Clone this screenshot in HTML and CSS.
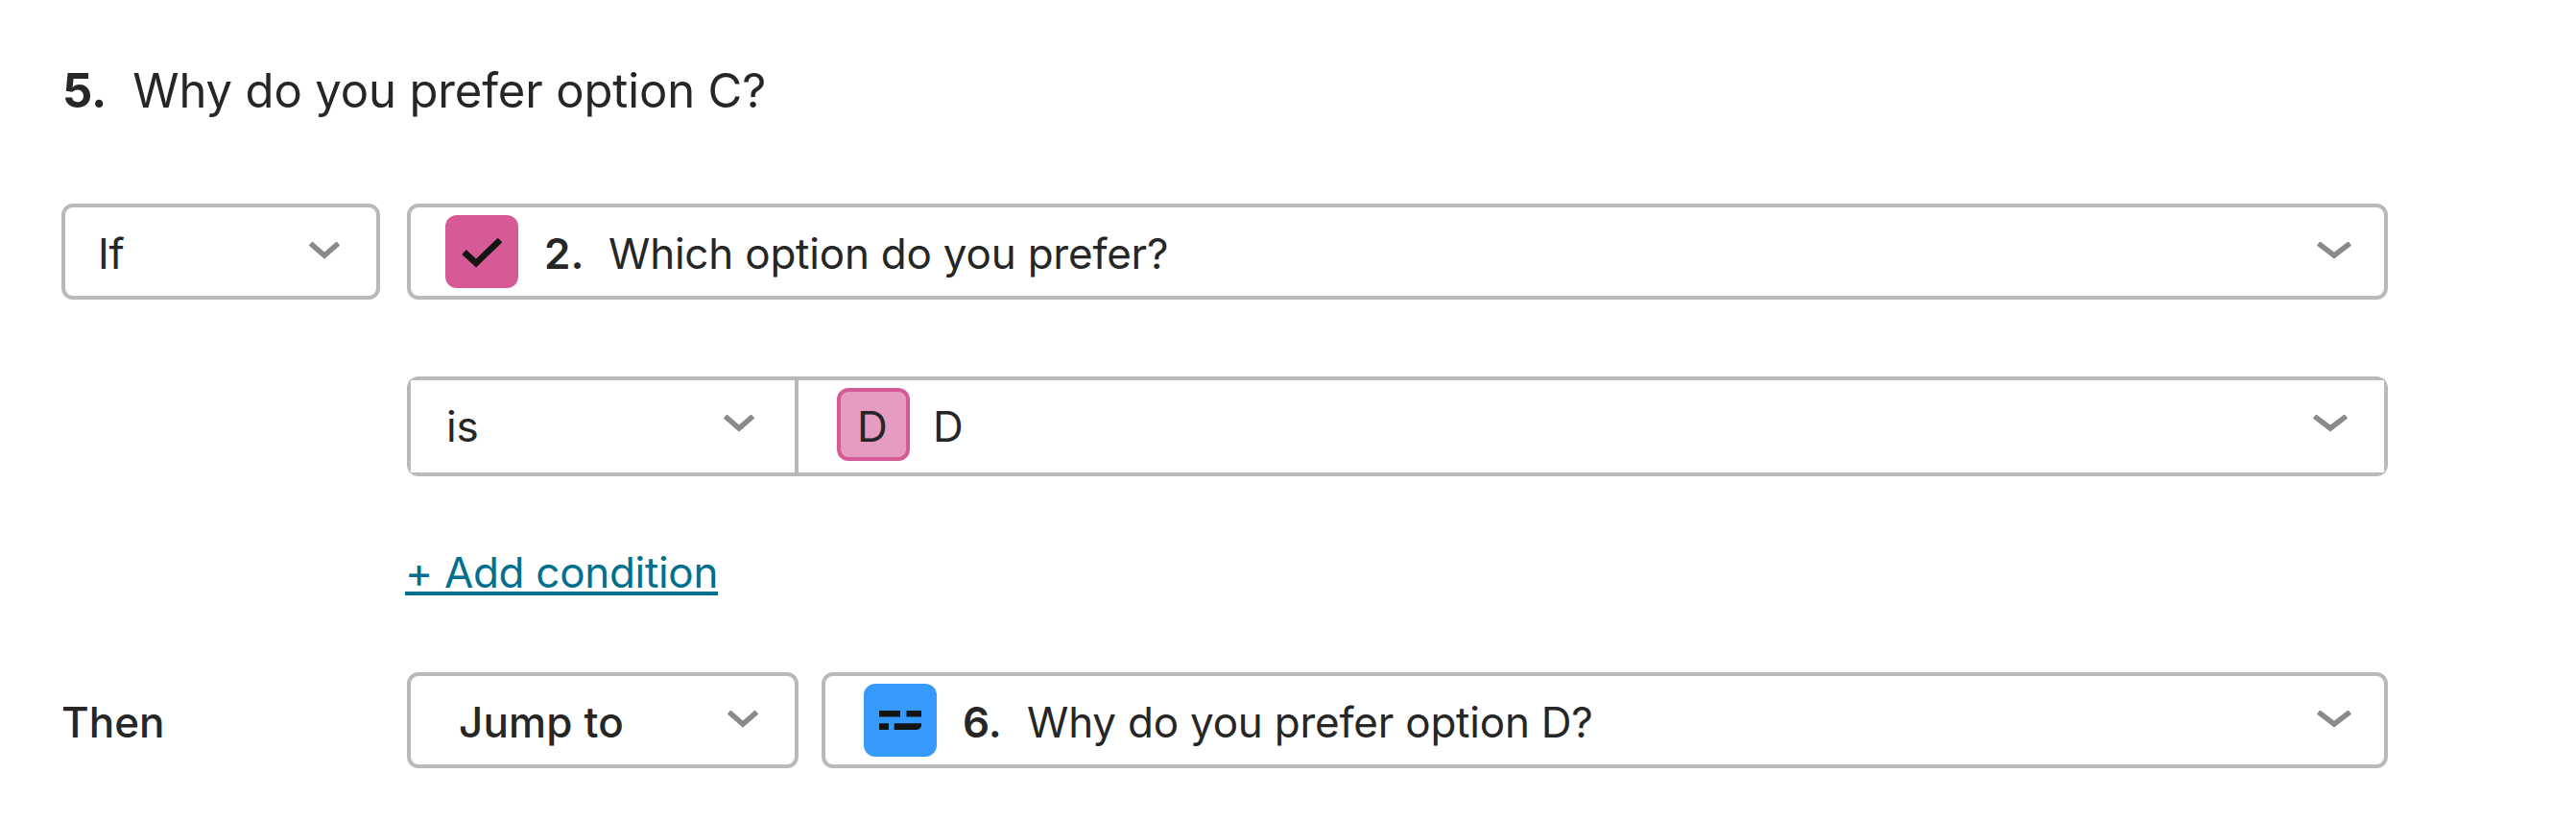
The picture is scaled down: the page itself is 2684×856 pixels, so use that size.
FILE: index.html
```html
<!DOCTYPE html>
<html lang="en">
<head>
    <meta charset="UTF-8">
    <meta name="viewport" content="width=device-width, initial-scale=1.0">
    <title>Question Logic</title>
    <link rel="stylesheet" href="styles.css">
</head>
<body>
    <div class="logic">
        <h1 class="question"><b>5.</b><span>Why do you prefer option C?</span></h1>

        <div class="row">
            <div class="select select-if">
                <span class="value">If</span>
                <svg class="chevron" width="32" height="18" viewBox="0 0 32 18"><path d="M1.5 1.5 L16 14 L30.5 1.5"/></svg>
            </div>
            <div class="select select-wide">
                <span class="badge badge-choice">
                    <svg width="76" height="76" viewBox="0 0 76 76"><path class="check" d="M19.5 38.5 L32 50 L57 26"/></svg>
                </span>
                <span class="number">2.</span>
                <span class="value">Which option do you prefer?</span>
                <svg class="chevron" width="36" height="18" viewBox="0 0 36 18"><path d="M1.5 1.5 L18 14 L34.5 1.5"/></svg>
            </div>
        </div>

        <div class="row row-compare">
            <div class="group">
                <div class="select select-operator">
                    <span class="value">is</span>
                    <svg class="chevron" width="32" height="18" viewBox="0 0 32 18"><path d="M1.5 1.5 L16 14 L30.5 1.5"/></svg>
                </div>
                <div class="select select-answer">
                    <span class="badge badge-letter">D</span>
                    <span class="value">D</span>
                    <svg class="chevron" width="36" height="18" viewBox="0 0 36 18"><path d="M1.5 1.5 L18 14 L34.5 1.5"/></svg>
                </div>
            </div>
        </div>

        <a class="add-condition" href="#">+ Add condition</a>

        <div class="row">
            <div class="label">Then</div>
            <div class="select select-action">
                <span class="value">Jump to</span>
                <svg class="chevron" width="32" height="18" viewBox="0 0 32 18"><path d="M1.5 1.5 L16 14 L30.5 1.5"/></svg>
            </div>
            <div class="select select-wide select-target">
                <span class="badge badge-text">
                    <svg width="76" height="76" viewBox="0 0 76 76">
                        <path d="M16 28h22v6.5H16zM44.5 28H60v6.5H44.5zM16 41.2h10V48H16zM31.7 41.2H60V43a5 5 0 0 1-5 5H31.7z"/>
                    </svg>
                </span>
                <span class="number">6.</span>
                <span class="value">Why do you prefer option D?</span>
                <svg class="chevron" width="36" height="18" viewBox="0 0 36 18"><path d="M1.5 1.5 L18 14 L34.5 1.5"/></svg>
            </div>
        </div>
    </div>
</body>
</html>
```
FILE: styles.css
```css
* {
    margin: 0;
    padding: 0;
    box-sizing: border-box;
}

body {
    font-family: Inter, sans-serif;
    font-size: 44px;
    line-height: 52px;
    background-color: #fff;
    color: #262626;
}

.logic {
    width: 2488px;
    padding: 65px 0 56px 64px;
}

.question {
    display: flex;
    gap: 27px;
    margin-bottom: 87px;
    padding-left: 1px;
    font-size: 49px;
    font-weight: 400;
    line-height: 60px;
    letter-spacing: -0.14px;
}

.row {
    display: flex;
}

.row-compare {
    margin-top: 80px;
    padding-left: 360px;
}

.label {
    width: 360px;
    padding-top: 26px;
    font-weight: 500;
}

.select {
    display: flex;
    height: 100px;
    padding: 8px 34px 8px 36px;
    border: 4px solid #b9b9b9;
    border-radius: 12px;
}

.select-if {
    width: 332px;
    margin-right: 28px;
    padding-left: 34px;
    padding-right: 38px;
}

.select-wide {
    flex: 1;
}

.group {
    display: flex;
    flex: 1;
    border-radius: 12px;
    overflow: hidden;
}

/* the group clips the corners */
.group .select {
    height: 104px;
    border-radius: 0;
}

.group .select-operator {
    width: 408px;
    padding-left: 37px;
    padding-right: 42px;
}

.group .select-answer {
    flex: 1;
    padding-left: 40px;
    padding-right: 38px;
    border-left: 0;
}

.select-action {
    width: 408px;
    margin-right: 24px;
    padding-left: 50px;
    padding-right: 38px;
    font-weight: 500;
}

.select-target {
    padding-left: 40px;
}

.value {
    padding-top: 14px;
    letter-spacing: -0.22px;
}

.select-action .value {
    letter-spacing: 0.15px;
}

.number {
    width: 42px;
    margin: 14px 25px 0 27px;
    font-weight: 600;
}

.chevron {
    margin: 28px 0 0 auto;
    fill: none;
    stroke: #8a8a8a;
    stroke-width: 5.5;
}

.badge {
    flex: none;
    width: 76px;
    height: 76px;
    border-radius: 12px;
}

.badge svg {
    display: block;
    fill: #141414;
}

.badge-choice {
    background-color: #d65a96;
}

.check {
    fill: none;
    stroke: #141414;
    stroke-width: 6.5;
}

.badge-letter {
    margin-right: 24px;
    padding: 10px 2px 0 0;
    border: 4px solid #d65a96;
    background-color: #e69bc0;
    text-align: center;
}

.badge-text {
    background-color: #359afa;
}

.add-condition {
    display: block;
    width: max-content;
    margin: 74px 0 78px 358px;
    color: #00708e;
    letter-spacing: -0.3px;
    text-decoration: underline;
    text-decoration-thickness: 4px;
    text-underline-offset: 4px;
    text-decoration-skip-ink: none;
}
```
